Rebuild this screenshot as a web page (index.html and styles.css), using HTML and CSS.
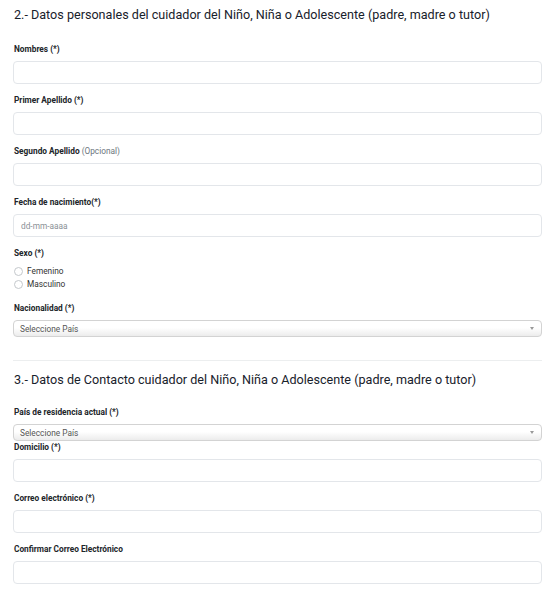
FILE: index.html
```html
<!DOCTYPE html>
<html lang="es">
<head>
<meta charset="utf-8">
<title>Formulario</title>
<link rel="stylesheet" href="styles.css">
</head>
<body>
<div class="form">
  <h2 class="section-title first">2.- Datos personales del cuidador del Niño, Niña o Adolescente (padre, madre o tutor)</h2>

  <div class="field">
    <label class="label">Nombres (*)</label>
    <input class="input" type="text">
  </div>
  <div class="field">
    <label class="label">Primer Apellido (*)</label>
    <input class="input" type="text">
  </div>
  <div class="field">
    <label class="label">Segundo Apellido <span class="opt">(Opcional)</span></label>
    <input class="input" type="text">
  </div>
  <div class="field">
    <label class="label">Fecha de nacimiento(*)</label>
    <input class="input" type="text" placeholder="dd-mm-aaaa">
  </div>
  <div class="field field-radio">
    <label class="label">Sexo (*)</label>
    <div class="radio-row"><span class="radio"></span><span class="radio-text">Femenino</span></div>
    <div class="radio-row"><span class="radio"></span><span class="radio-text">Masculino</span></div>
  </div>
  <div class="field field-select">
    <label class="label">Nacionalidad (*)</label>
    <div class="select"><span class="select-text">Seleccione País</span><span class="arrow"></span></div>
  </div>

  <hr class="divider">

  <h2 class="section-title">3.- Datos de Contacto cuidador del Niño, Niña o Adolescente (padre, madre o tutor)</h2>

  <div class="field field-select tight">
    <label class="label">País de residencia actual (*)</label>
    <div class="select"><span class="select-text">Seleccione País</span><span class="arrow"></span></div>
  </div>
  <div class="field">
    <label class="label">Domicilio (*)</label>
    <input class="input" type="text">
  </div>
  <div class="field">
    <label class="label">Correo electrónico (*)</label>
    <input class="input" type="text">
  </div>
  <div class="field">
    <label class="label">Confirmar Correo Electrónico</label>
    <input class="input" type="text">
  </div>
</div>
</body>
</html>
```

FILE: styles.css
```css
* { box-sizing: border-box; }
html, body { margin: 0; padding: 0; background: #fff; }
body {
  font-family: Roboto, "Liberation Sans", Arial, sans-serif;
  color: #212529;
}
.form {
  width: 554px;
  padding: 0 12px 0 13px;
}
.section-title {
  margin: 0;
  font-size: 12.6px;
  line-height: 16px;
  font-weight: 400;
  color: #18212b;
  padding-left: 1px;
  margin-bottom: 18.5px;
}
.section-title.first {
  margin-top: 7px;
  margin-bottom: 20.5px;
}
.field {
  margin-bottom: 10.5px;
}
.label {
  display: block;
  font-size: 8.3px;
  line-height: 11px;
  font-weight: 700;
  color: #212529;
  margin-bottom: 6.5px;
  padding-left: 1px;
}
.opt {
  font-weight: 400;
  color: #6c757d;
}
.input {
  display: block;
  width: 100%;
  height: 23px;
  margin: 0;
  border: 1px solid #e3e6ea;
  border-radius: 4px;
  background: #fff;
  padding: 0 7px;
  font-family: inherit;
  font-size: 8.3px;
  color: #495057;
  outline: none;
}
.input::placeholder { color: #8a8f95; }
.field-radio .label { margin-bottom: 6px; }
.radio-row {
  display: flex;
  align-items: center;
  height: 13px;
  gap: 4px;
}
.radio {
  width: 9px;
  height: 9px;
  border: 1px solid #c4c8cc;
  border-radius: 50%;
  background: #fff;
  margin-left: 1px;
}
.radio-text {
  font-size: 8.3px;
  color: #333;
}
.field-radio { margin-bottom: 12px; }
.select {
  display: flex;
  align-items: center;
  justify-content: space-between;
  height: 17px;
  border: 1px solid #d3d3d3;
  border-radius: 4px;
  background: linear-gradient(to bottom, #ffffff 45%, #ececec 100%);
  padding: 0 6px 0 6px;
}
.select-text {
  font-size: 8.3px;
  color: #555;
}
.arrow {
  width: 0;
  height: 0;
  border-left: 2.5px solid transparent;
  border-right: 2.5px solid transparent;
  border-top: 3.5px solid #999;
  margin-right: 1px;
}
.field-select { margin-bottom: 0; }
.tight { margin-bottom: 0.5px; }
.divider {
  margin: 23px 0 11px 0;
  border: 0;
  border-top: 1px solid #eceeef;
  height: 0;
}
```
